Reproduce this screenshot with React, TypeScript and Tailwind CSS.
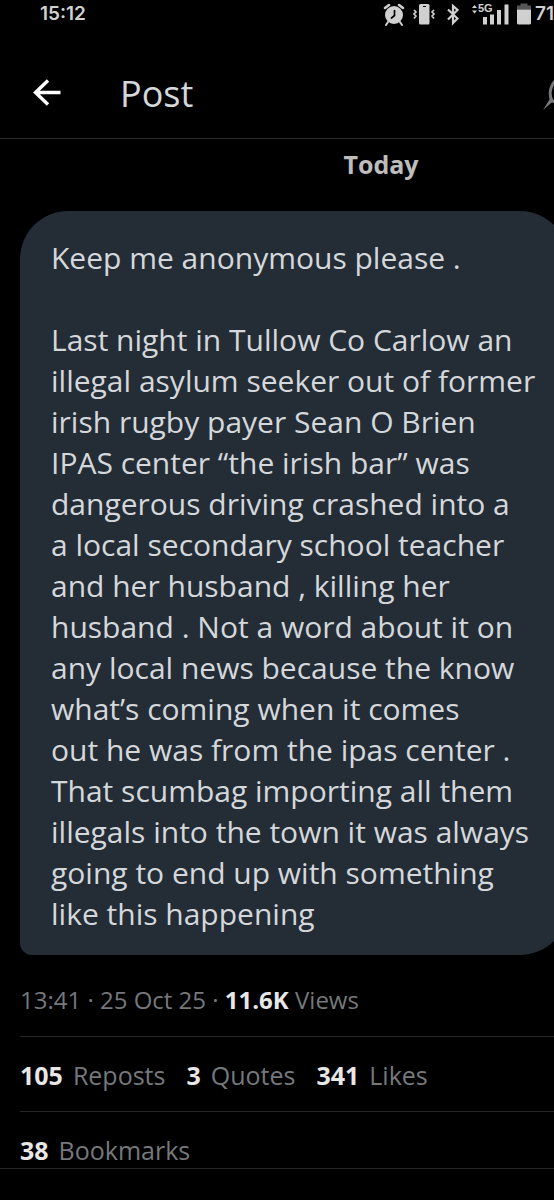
import type { ReactNode } from "react";

const message = [
  "Keep me anonymous please .",
  "",
  "Last night in Tullow Co Carlow an",
  "illegal asylum seeker out of former",
  "irish rugby payer Sean O Brien",
  "IPAS center “the irish bar” was",
  "dangerous driving crashed into a",
  "a local secondary school teacher",
  "and her husband , killing her",
  "husband . Not a word about it on",
  "any local news because the know",
  "what’s coming when it comes",
  "out he was from the ipas center .",
  "That scumbag importing all them",
  "illegals into the town it was always",
  "going to end up with something",
  "like this happening",
].join("\n");

function StatusBar() {
  return (
    <div className="flex h-7 items-center justify-between overflow-hidden pl-10 text-[#d0d0d0]">
      <time className="font-['Inter'] text-[19px] leading-7 font-semibold">15:12</time>
      <div className="flex shrink-0 items-center">
        <svg className="mr-2 h-6 w-[22px]" viewBox="0 0 22 24" fill="none" stroke="currentColor" strokeLinecap="round" aria-label="Alarm">
          <circle cx="11" cy="13" r="9" fill="currentColor" stroke="none" />
          <path d="M2 6 6 3M20 6 16 3" strokeWidth="2.6" />
          <path d="m5 20-2 3M17 20l2 3" strokeWidth="2" />
          <path d="M11.500 8.500v5L8.500 16" stroke="#000" strokeWidth="1.7" />
        </svg>
        <svg className="mr-3 h-6 w-[22px]" viewBox="0 0 22 24" fill="none" stroke="currentColor" strokeWidth="1.6" aria-label="Vibrate">
          <rect x="6" y="2" width="10.5" height="20.500" rx="1.5" fill="currentColor" stroke="none" />
          <path d="M10 4.500h3" stroke="#000" strokeWidth="1" />
          <path d="m1 8 2 2-2 2 2 2-2 2.500M21 8l-2 2 2 2-2 2 2 2.500" />
        </svg>
        <svg className="mr-3 h-6 w-3" viewBox="0 0 12 24" fill="none" stroke="currentColor" strokeWidth="2.2" aria-label="Bluetooth">
          <path d="m1 7.500 9.500 9L6 21V4l4.500 4L1 17.500" />
        </svg>
        <svg className="mr-2 h-6 w-[38px]" viewBox="0 0 38 24" fill="currentColor" aria-label="5G signal">
          <path d="m1 6 2.500-3L6 6zM1 8.500 3.500 11.500 6 8.500z" />
          <text x="7" y="10" fontFamily="Liberation Sans" fontSize="11" fontWeight="700">5G</text>
          <path d="M12 15h4v7.500h-4zM19 12.500h4v10h-4zM26 8h4v14.500h-4zM33.500 2.500h4v20h-4z" />
        </svg>
        <svg className="mr-1 h-6 w-[14px]" viewBox="0 0 14 24" fill="currentColor" aria-label="Battery">
          <path d="M3.500 1.500h7v2H14v4H0v-4h3.500z" fill="#555" />
          <path d="M0 7.500h14V21a1.500 1.500 0 0 1-1.500 1.500h-11A1.500 1.500 0 0 1 0 21z" />
        </svg>
        <span className="font-['Inter'] text-[19px] leading-7 font-semibold">71</span>
      </div>
    </div>
  );
}

function Stat({ value, children }: { value: string; children: ReactNode }) {
  return (
    <a href="#" className="flex gap-[10px]">
      <strong className="font-bold text-[#e7e7e7]">{value}</strong>
      <span>{children}</span>
    </a>
  );
}

export default function App() {
  return (
    <main className="min-h-screen overflow-hidden bg-black font-['Open_Sans',sans-serif] text-[#d4d8dc]">
      <StatusBar />
      <header className="flex h-[111px] items-center border-b border-[#2b2b2b] pt-5 pl-8">
        <button aria-label="Back" className="mr-[58px] text-white">
          <svg className="h-[30px] w-[30px]" viewBox="0 0 30 30" fill="none" stroke="currentColor" strokeWidth="3.4">
            <path d="M28.500 14.500H4M16 2.500 3.500 14.500 16 26.500" />
          </svg>
        </button>
        <h1 className="pt-0.5 text-[36px] leading-10 font-medium">Post</h1>
        <button aria-label="Compose" className="-mr-6 ml-auto text-[#77777c]">
          <svg className="h-9 w-9" viewBox="0 0 36 36" fill="none" stroke="currentColor" strokeWidth="3">
            <path d="M10 26C6 18 9 6 18 4c12-1 17 8 14 17-4 6-12 7-22 5z" />
            <path d="M1 35 9 22l3 3.500z" fill="currentColor" stroke="none" />
          </svg>
        </button>
      </header>
      <h2 className="-mr-52 pt-[7px] text-center text-[25px] leading-9 font-bold text-[#bdbdbd]">Today</h2>
      <section className="mt-[29px] -mr-3.5 ml-5 rounded-[48px] rounded-bl-xl bg-[#242d36] pt-[26px] pb-[21px] pl-[31px]">
        <p className="text-[30px] leading-[41px] whitespace-pre">{message}</p>
      </section>
      <section className="pl-5 text-[24px] leading-9 text-[#75787c]">
        <p className="border-b border-[#262626] pt-[27px] pb-[18px]">
          13:41 · 25 Oct 25 · <strong className="font-bold text-[#e7e7e7]">11.6K</strong> Views
        </p>
        <div className="flex gap-[21px] border-b border-[#262626] pt-5 pb-[18px] text-[25px] leading-9">
          <Stat value="105">Reposts</Stat>
          <Stat value="3">Quotes</Stat>
          <Stat value="341">Likes</Stat>
        </div>
        <div className="-ml-5 flex border-b border-[#262626] pt-5 pl-5 text-[25px] leading-9">
          <Stat value="38">Bookmarks</Stat>
        </div>
      </section>
    </main>
  );
}
